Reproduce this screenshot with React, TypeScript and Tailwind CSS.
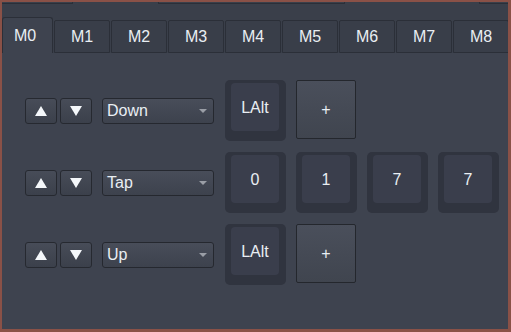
import React from "react";

const font = { fontFamily: '"Liberation Sans", Arial, sans-serif' };

const tabs = ["M0", "M1", "M2", "M3", "M4", "M5", "M6", "M7", "M8"];

function UpDown() {
  return (
    <div className="flex shrink-0 gap-[3px]">
      <button className="flex h-[26px] w-[32px] items-center justify-center rounded-[3px] border border-[#262930] bg-gradient-to-b from-[#474c58] to-[#3b404b]">
        <svg width="12" height="10" viewBox="0 0 12 10">
          <polygon points="6,0 12,10 0,10" fill="#f4f7fa" />
        </svg>
      </button>
      <button className="flex h-[26px] w-[32px] items-center justify-center rounded-[3px] border border-[#262930] bg-gradient-to-b from-[#474c58] to-[#3b404b]">
        <svg width="12" height="10" viewBox="0 0 12 10">
          <polygon points="0,0 12,0 6,10" fill="#f4f7fa" />
        </svg>
      </button>
    </div>
  );
}

function Select({ value }: { value: string }) {
  return (
    <div className="ml-[10px] flex h-[26px] w-[112px] shrink-0 items-center justify-between rounded-[3px] border border-[#25282f] bg-gradient-to-b from-[#484d59] to-[#3d424d] pl-[4px] pr-[6px] text-[16px] text-[#e9eef3]">
      <span>{value}</span>
      <svg width="8" height="4" viewBox="0 0 8 4">
        <polygon points="0,0 8,0 4,4" fill="#9a9ea6" />
      </svg>
    </div>
  );
}

function Key({ label }: { label: string }) {
  return (
    <div className="h-[61px] w-[61px] shrink-0 rounded-[5px] bg-[#30343f] pb-[10px] pl-[6px] pr-[7px] pt-[3px]">
      <div className="flex h-full w-full items-center justify-center rounded-[4px] bg-[#3a3e4c] pt-[1px] text-[16px] text-[#e9eef3]">
        {label}
      </div>
    </div>
  );
}

function AddButton() {
  return (
    <button className="flex h-[59px] w-[60px] shrink-0 items-center justify-center self-start rounded-[2px] border border-[#24272d] bg-gradient-to-b from-[#4a4f5b] to-[#40454f] text-[16px] text-[#e9eef3]">
      +
    </button>
  );
}

function Row({ mode, keys, add }: { mode: string; keys: string[]; add?: boolean }) {
  return (
    <div className="flex h-[61px] items-center">
      <UpDown />
      <Select value={mode} />
      <div className="ml-[11px] flex shrink-0 gap-[10px]">
        {keys.map((k, i) => (
          <Key key={i} label={k} />
        ))}
        {add && <AddButton />}
      </div>
    </div>
  );
}

export default function App() {
  return (
    <div className="h-[332px] w-[511px] bg-[#8a5147] pb-[3px] pl-[2px] pr-[3px] pt-[2px]" style={font}>
      <div className="flex h-full w-full flex-col overflow-hidden bg-[#3e434f]">
        <div className="relative h-[15px] shrink-0 bg-[#3a3f4a]">
          <div className="h-[2px] w-[71px] border-b border-r border-[#2b2f38]" />
          <div className="absolute left-[156px] top-0 h-[2px] w-[187px] border-b border-l border-r border-[#2b2f38]" />
          <div className="absolute left-[477px] top-0 h-[2px] w-[40px] border-b border-l border-[#2b2f38]" />
        </div>
        <div className="flex h-[36px] shrink-0 items-end gap-[1px] bg-[#3a3f4a]">
          {tabs.map((t, i) =>
            i === 0 ? (
              <div
                key={t}
                className="flex h-[36px] w-[51px] shrink-0 items-center rounded-t-[3px] border-l border-r border-t border-[#2b2f38] bg-[#3e434f] pl-[11px] text-[16px] text-[#e9eef3]"
              >
                {t}
              </div>
            ) : (
              <div
                key={t}
                className="flex h-[33px] w-[56px] shrink-0 items-center justify-center rounded-t-[2px] border border-[#2b2f38] bg-[#393e49] text-[16px] text-[#e9eef3]"
              >
                {t}
              </div>
            )
          )}
        </div>
        <div className="flex flex-col gap-[11px] pl-[23px] pt-[27px]">
          <Row mode="Down" keys={["LAlt"]} add />
          <Row mode="Tap" keys={["0", "1", "7", "7", ""]} />
          <Row mode="Up" keys={["LAlt"]} add />
        </div>
      </div>
    </div>
  );
}
